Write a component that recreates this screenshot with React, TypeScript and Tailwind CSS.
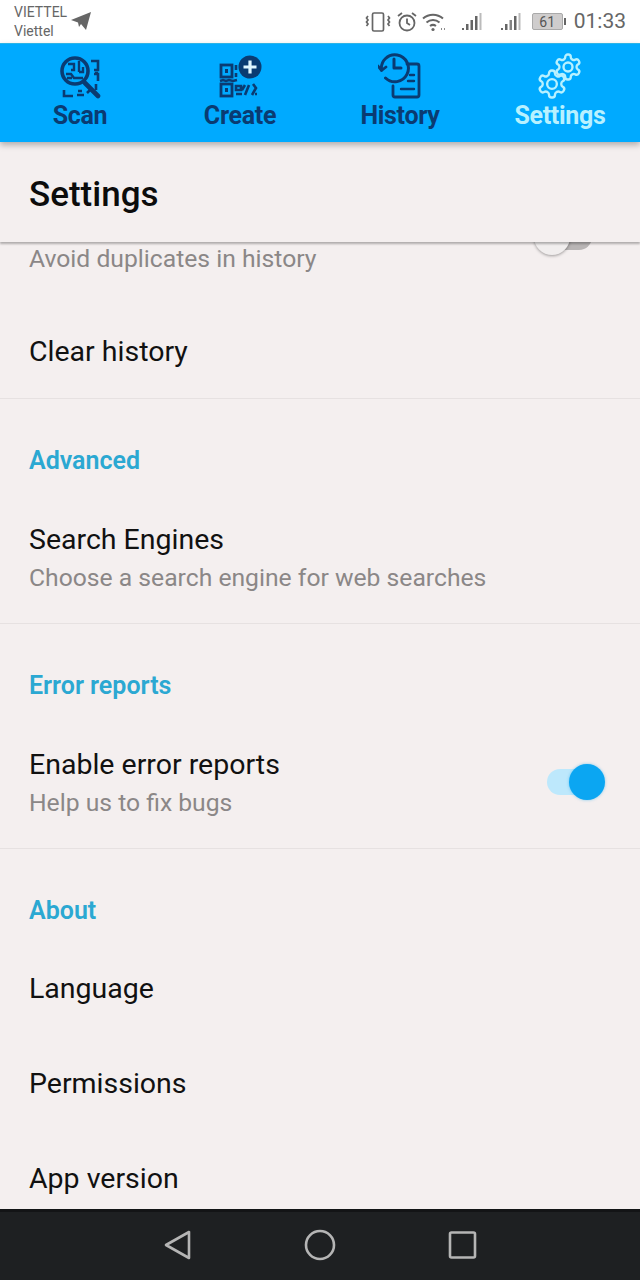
import { ReactNode } from 'react';

const TAB_DARK = '#0a3b72';
const TAB_ACTIVE = '#b8f1ff';

// lucide "settings" outline, reused for both gears
const GEAR =
  'M12.22 2h-.44a2 2 0 0 0-2 2v.18a2 2 0 0 1-1 1.73l-.43.25a2 2 0 0 1-2 0l-.15-.08a2 2 0 0 0-2.73.73l-.22.38a2 2 0 0 0 .73 2.73l.15.1a2 2 0 0 1 1 1.72v.51a2 2 0 0 1-1 1.74l-.15.09a2 2 0 0 0-.73 2.73l.22.38a2 2 0 0 0 2.73.73l.15-.08a2 2 0 0 1 2 0l.43.25a2 2 0 0 1 1 1.73V20a2 2 0 0 0 2 2h.44a2 2 0 0 0 2-2v-.18a2 2 0 0 1 1-1.73l.43-.25a2 2 0 0 1 2 0l.15.08a2 2 0 0 0 2.73-.73l.22-.39a2 2 0 0 0-.73-2.73l-.15-.08a2 2 0 0 1-1-1.74v-.5a2 2 0 0 1 1-1.74l.15-.09a2 2 0 0 0 .73-2.73l-.22-.38a2 2 0 0 0-2.73-.73l-.15.08a2 2 0 0 1-2 0l-.43-.25a2 2 0 0 1-1-1.73V4a2 2 0 0 0-2-2z';

function ScanIcon() {
  return (
    <svg width="44" height="46" viewBox="0 0 44 46" fill="none" stroke={TAB_DARK}>
      <path d="M33 8h7v9h-4M36 21h4v7M38 31v6M37 20h3M6 37v6h9M19 42h7M20 38h4M29 40l3-3" strokeWidth="2.6" />
      <circle cx="17" cy="18" r="13" strokeWidth="3.6" />
      <path d="M10 11h6v6h-3M21 8v11M21 19h4v-5M8 21h5l3 4h9M9 25h5" strokeWidth="2.4" />
      <path d="M27 30l13 13" strokeWidth="4.6" strokeLinecap="round" />
    </svg>
  );
}

function CreateIcon() {
  return (
    <svg width="44" height="46" viewBox="0 0 44 46" fill="none" stroke={TAB_DARK}>
      <rect x="3" y="12" width="11" height="12" strokeWidth="2.8" />
      <rect x="7" y="16" width="3" height="4" fill={TAB_DARK} stroke="none" />
      <rect x="3" y="31" width="11" height="12" strokeWidth="2.8" />
      <rect x="7" y="35" width="3" height="4" fill={TAB_DARK} stroke="none" />
      <path d="M2 28l3-1 3 1 3-1 4 1 4-1M18 12v5M18 20v4M18 33h5v4h-5zM18 41h6M27 32l-3 5M31 32l-4 10M35 31l3 4-4 7M37 41h2" strokeWidth="2.6" />
      <circle cx="32" cy="14" r="11.5" fill={TAB_DARK} stroke="none" />
      <path d="M32 7.5v13M25.5 14h13" stroke="#dff6ff" strokeWidth="3.2" />
    </svg>
  );
}

function HistoryIcon() {
  return (
    <svg width="44" height="46" viewBox="0 0 44 46" fill="none" stroke={TAB_DARK} strokeLinecap="round" strokeLinejoin="round">
      <path d="M29 11h10a2 2 0 0 1 2 2v29a2 2 0 0 1-2 2H17a2 2 0 0 1-2-2v-9" strokeWidth="2.8" />
      <path d="M32 22h4M30 28h6M23 36h13" strokeWidth="2.4" />
      <path d="M3.5 17a13.5 13.5 0 1 1 4 8" strokeWidth="3" />
      <path d="M0 13l3.5 4.5 4.5-3.5" strokeWidth="2.8" />
      <path d="M16 6v9h7" strokeWidth="3" />
    </svg>
  );
}

function SettingsIcon() {
  return (
    <svg width="48" height="46" viewBox="0 0 48 46" fill="none" stroke={TAB_ACTIVE} strokeLinecap="round" strokeLinejoin="round" className="overflow-visible">
      <g transform="translate(17 -1) scale(1.25)" strokeWidth="1.9">
        <path d={GEAR} />
        <circle cx="12" cy="12" r="3.6" />
      </g>
      <g transform="translate(-0.2 14.8) scale(1.35)" strokeWidth="1.75">
        <path d={GEAR} />
        <circle cx="12" cy="12" r="3.6" />
      </g>
    </svg>
  );
}

function Tab({ label, icon, active }: { label: string; icon: ReactNode; active?: boolean }) {
  return (
    <div className="flex flex-col items-center">
      <div className="h-[46px] flex items-center justify-center">{icon}</div>
      <span
        className={`text-[25px] leading-[30px] font-bold tracking-[-0.3px] mt-[2px] ${active ? 'text-[#b8f1ff]' : 'text-[#0a3b72]'}`}
      >
        {label}
      </span>
    </div>
  );
}

function Signal({ className, faint }: { className: string; faint?: boolean }) {
  return (
    <svg className={className} width="20" height="18" viewBox="0 0 20 18" fill="#666">
      <rect x="0" y="15" width="2" height="2" />
      <rect x="4" y="11" width="2.5" height="6" />
      <rect x="8.5" y="7" width="2.5" height="10" opacity={faint ? 0.8 : 1} />
      <rect x="13" y="3" width="2.5" height="14" />
      <rect x="17.5" y="0" width="2" height="17" fill="#bbb" />
    </svg>
  );
}

function StatusIcons() {
  return (
    <div className="flex items-center text-[#666]">
      {/* vibrate */}
      <svg width="26" height="20" viewBox="0 0 26 20" fill="none" stroke="#666" strokeWidth="1.7">
        <rect x="7.5" y="1" width="11" height="18" rx="1.5" />
        <path d="M3 4L1.5 6L3 8L1.5 10L3 12L1.5 14M23 4l1.5 2L23 8l1.5 2L23 12l1.5 2" />
      </svg>
      {/* alarm */}
      <svg className="ml-[5px]" width="22" height="22" viewBox="0 0 22 22" fill="none" stroke="#666" strokeWidth="1.8">
        <circle cx="11" cy="12" r="7.5" />
        <path d="M11 7.5V12l3 2M2 5l4-3M20 5l-4-3" />
      </svg>
      {/* wifi */}
      <svg className="ml-[4px]" width="24" height="20" viewBox="0 0 24 20" fill="none" stroke="#666" strokeWidth="2">
        <path d="M1 6.5a15 15 0 0 1 20 0M4.5 10.5a10 10 0 0 1 13 0M8 14a5 5 0 0 1 6 0" />
        <circle cx="11" cy="17.5" r="1.6" fill="#666" stroke="none" />
        <path d="M19 17h1M22 17h1" strokeWidth="1.6" />
      </svg>
      <Signal className="ml-[16px]" />
      <Signal className="ml-[19px]" faint />
      {/* battery */}
      <div className="ml-[11px] flex items-center">
        <div className="w-[31px] h-[17px] rounded-[2px] border border-[#aaa] bg-[#cfcdcd] flex items-center justify-center text-[14px] leading-none text-[#555]">
          61
        </div>
        <div className="w-[2px] h-[7px] bg-[#666] ml-[1px]" />
      </div>
      <span className="ml-[8px] text-[21px] leading-none text-[#666]">01:33</span>
    </div>
  );
}

function Toggle({ on }: { on?: boolean }) {
  if (on) {
    return (
      <div className="relative w-[58px] h-[26px] mr-[6px] -mt-[4px]">
        <div className="absolute left-0 top-0 w-[48px] h-[26px] rounded-full bg-[#bde8fc]" />
        <div className="absolute right-0 top-[-5px] w-[36px] h-[36px] rounded-full bg-[#0ba6f2] shadow-[0_0_3px_rgba(11,166,242,0.5)]" />
      </div>
    );
  }
  return (
    <div className="relative w-[58px] h-[26px] mr-[19px]">
      <div className="absolute right-0 top-0 w-[50px] h-[26px] rounded-full bg-[#b9b5b5]" />
      <div className="absolute left-0 top-[-5px] w-[36px] h-[36px] rounded-full bg-[#f1eeee] shadow-[0_1px_3px_rgba(0,0,0,0.35)]" />
    </div>
  );
}

function Row({ title, divider }: { title: string; divider?: boolean }) {
  return (
    <div className={`px-[29px] flex items-center ${divider ? 'h-[96px] pt-[2px] border-b border-[#e6e1e1]' : 'h-[95px]'}`}>
      <span className="text-[28.5px] leading-[36px] text-[#111]">{title}</span>
    </div>
  );
}

function DetailRow({ title, sub, toggle }: { title: string; sub: string; toggle?: ReactNode }) {
  return (
    <div className="h-[131px] pt-[2px] px-[29px] flex items-center justify-between border-b border-[#e6e1e1]">
      <div className="flex flex-col gap-[2px]">
        <span className="text-[28.5px] leading-[36px] text-[#111]">{title}</span>
        <span className="text-[24.7px] leading-[36px] text-[#8b8787]">{sub}</span>
      </div>
      {toggle}
    </div>
  );
}

function SectionHeader({ title, short }: { title: string; short?: boolean }) {
  return (
    <div className={`pt-[44px] px-[29px] ${short ? 'h-[92px]' : 'h-[94px]'}`}>
      <span className="block text-[25px] leading-[36px] font-semibold text-[#2ba8d2]">{title}</span>
    </div>
  );
}

export default function App() {
  return (
    <div className="w-[640px] h-[1280px] flex flex-col bg-[#f4efef] font-['Roboto',sans-serif] overflow-hidden">
      {/* Status bar */}
      <div className="h-[43px] shrink-0 bg-white flex items-center justify-between pl-[14px] pr-[14px]">
        <div className="flex items-center">
          <div className="flex flex-col text-[14px] leading-[19px] text-[#666]">
            <span>VIETTEL</span>
            <span>Viettel</span>
          </div>
          <svg className="ml-[4px] mb-[1px]" width="20" height="18" viewBox="0 0 20 18" fill="#666">
            <path d="M0 8L20 0L15 18L10 12L8 15L7 10.5Z" />
          </svg>
        </div>
        <StatusIcons />
      </div>

      {/* Tabs */}
      <div className="h-[99px] shrink-0 bg-[#00aaff] border-t border-[#2ab4e8] grid grid-cols-4 pt-[9px] relative z-20 shadow-[0_3px_6px_rgba(0,0,0,0.28)]">
        <Tab label="Scan" icon={<ScanIcon />} />
        <Tab label="Create" icon={<CreateIcon />} />
        <Tab label="History" icon={<HistoryIcon />} />
        <Tab label="Settings" icon={<SettingsIcon />} active />
      </div>

      {/* Page title */}
      <div className="h-[100px] shrink-0 px-[29px] flex items-center bg-[#f4efef] relative z-10 shadow-[0_2px_2px_rgba(0,0,0,0.28)]">
        <h1 className="text-[35px] leading-[40px] font-medium text-[#0c0c0c] mt-[6px]">Settings</h1>
      </div>

      {/* Scrolled preference list */}
      <div className="flex-1 overflow-hidden">
        <div className="h-[61px] px-[29px] flex justify-between">
          <span className="text-[24.7px] leading-[36px] text-[#8b8787] -mt-[1px]">Avoid duplicates in history</span>
          <div className="-mt-[18px]">
            <Toggle />
          </div>
        </div>
        <Row title="Clear history" divider />
        <SectionHeader title="Advanced" />
        <DetailRow title="Search Engines" sub="Choose a search engine for web searches" />
        <SectionHeader title="Error reports" />
        <DetailRow title="Enable error reports" sub="Help us to fix bugs" toggle={<Toggle on />} />
        <SectionHeader title="About" short />
        <Row title="Language" />
        <Row title="Permissions" />
        <Row title="App version" />
      </div>

      {/* Navigation bar */}
      <div className="h-[71px] shrink-0 bg-[#1e2022] border-t-[3px] border-[#131416] flex items-center justify-center">
        <svg width="320" height="34" viewBox="0 0 320 34" fill="none" stroke="#b5b5b5" strokeWidth="2.6" strokeLinejoin="round">
          <path d="M6 16L29 3V29Z" />
          <circle cx="160" cy="16" r="14" />
          <rect x="290" y="3.5" width="25" height="25" rx="1.5" />
        </svg>
      </div>
    </div>
  );
}
